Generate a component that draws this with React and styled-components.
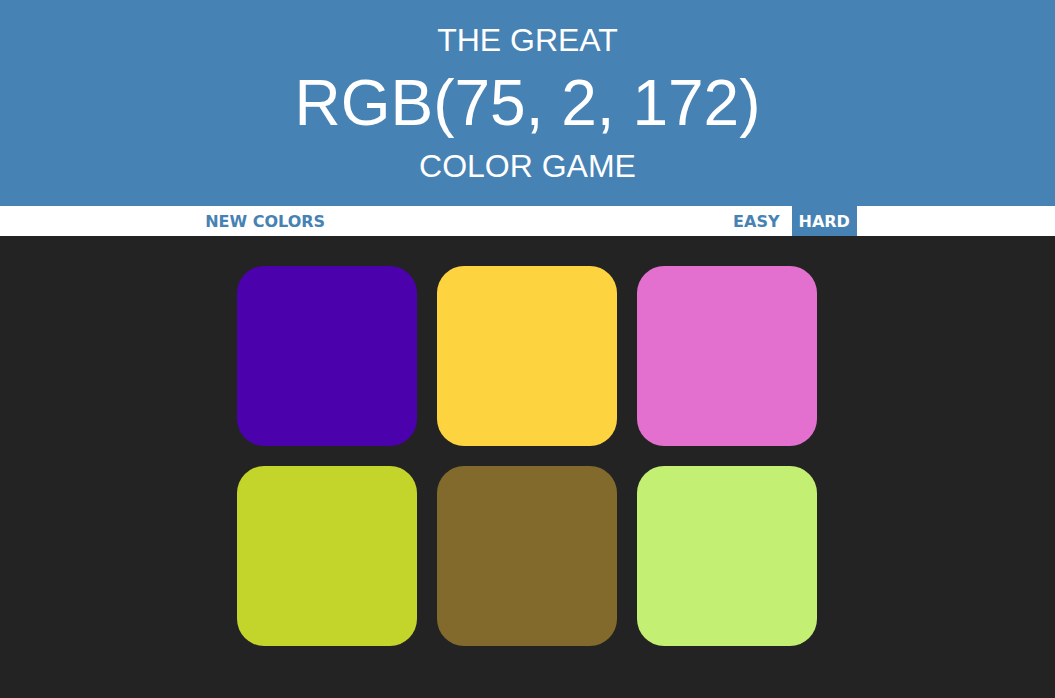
import React, { useState } from "react";
import styled, { createGlobalStyle } from "styled-components";

const GlobalStyle = createGlobalStyle`
    body {
        margin: 0;
        background-color: #232323;
        font-family: "Liberation Sans", Arial, sans-serif;
    }
`;

const Header = styled.h1`
    margin: 0;
    padding: 23px 0 22px;
    background-color: steelblue;
    color: white;
    text-align: center;
    text-transform: uppercase;
    font-weight: normal;
    font-size: 32px;
`;

const Line = styled.span`
    display: block;
    line-height: 35px;
`;

const ColorDisplay = styled.span`
    display: block;
    font-size: 64px;
    line-height: 70px;
    margin: 10px 0 11px;
`;

const Stripe = styled.div`
    display: flex;
    justify-content: center;
    height: 30px;
    background-color: white;
`;

const Message = styled.span`
    width: 394px;
`;

const Button = styled.button`
    border: none;
    background: ${(p) => (p.$selected ? "steelblue" : "none")};
    color: ${(p) => (p.$selected ? "white" : "steelblue")};
    text-transform: uppercase;
    height: 100%;
    padding: 0 7px;
    margin-left: ${(p) => (p.$gap ? "5px" : "0")};
    font-family: "DejaVu Sans", Verdana, sans-serif;
    font-weight: 700;
    font-size: 16px;
    cursor: pointer;
    outline: none;
`;

const Container = styled.div`
    max-width: 600px;
    margin: 20px auto;
    display: flex;
    flex-wrap: wrap;
`;

const Square = styled.div`
    width: 30%;
    aspect-ratio: 1;
    margin: 1.66%;
    border-radius: 15%;
    background-color: ${(p) => p.$color};
    cursor: pointer;
`;

const colors = [
    "rgb(75, 2, 172)",
    "#fdd43f",
    "#e370cf",
    "#c3d42a",
    "#826a2d",
    "#c3ef73",
];

const App = () => {
    const [hard, setHard] = useState(true);
    return (
        <>
            <GlobalStyle />
            <Header>
                <Line>The Great</Line>
                <ColorDisplay>RGB(75, 2, 172)</ColorDisplay>
                <Line>Color Game</Line>
            </Header>
            <Stripe>
                <Button>New Colors</Button>
                <Message></Message>
                <Button $selected={!hard} onClick={() => setHard(false)}>
                    Easy
                </Button>
                <Button $gap $selected={hard} onClick={() => setHard(true)}>
                    Hard
                </Button>
            </Stripe>
            <Container>
                {colors.map((c, i) => (
                    <Square key={i} $color={c} />
                ))}
            </Container>
        </>
    );
};

export default App;
